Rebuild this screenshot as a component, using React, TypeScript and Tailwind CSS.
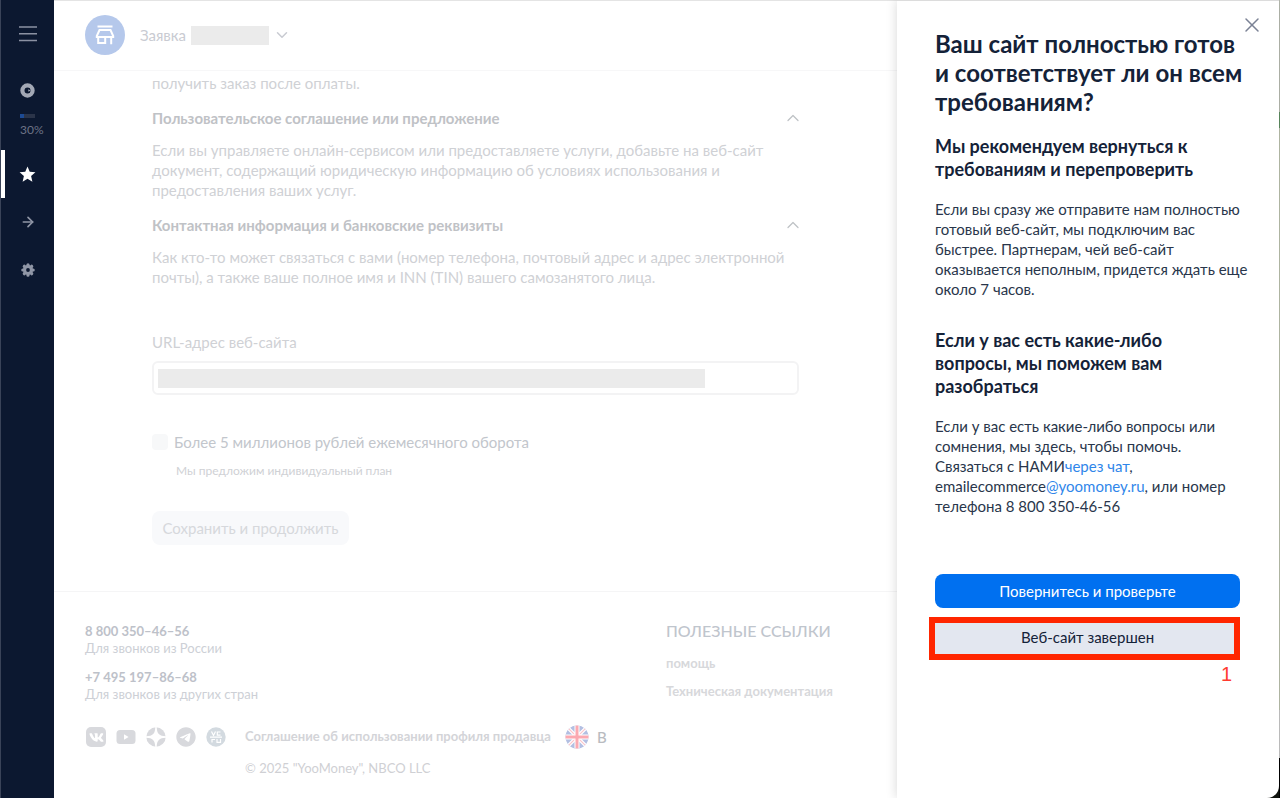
import React, { useState } from 'react';
import { ArrowRight, ChevronDown, ChevronUp, X } from 'lucide-react';
import { FaVk } from 'react-icons/fa';
import { FaTelegram } from 'react-icons/fa6';
import { MdStar } from 'react-icons/md';

const SECTIONS = [
  {
    title: 'Пользовательское соглашение или предложение',
    text: 'Если вы управляете онлайн-сервисом или предоставляете услуги, добавьте на веб-сайт документ, содержащий юридическую информацию об условиях использования и предоставления ваших услуг.',
  },
  {
    title: 'Контактная информация и банковские реквизиты',
    text: 'Как кто-то может связаться с вами (номер телефона, почтовый адрес и адрес электронной почты), а также ваше полное имя и INN (TIN) вашего самозанятого лица.',
  },
];

const PHONES = [
  { number: '8 800 350–46–56', note: 'Для звонков из России' },
  { number: '+7 495 197–86–68', note: 'Для звонков из других стран' },
];

const StoreIcon = () => (
  <svg width="20" height="20" viewBox="0 0 20 20" fill="none" stroke="white" strokeWidth="2">
    <path d="M2.5 1.500h15" />
    <path d="M4.500 5h11l2.700 6v1H1.800v-1z" />
    <path d="M3.200 12.500V18h7v-5.500M16.200 12.500V19.200" />
  </svg>
);

const CoinIcon = () => (
  <svg width="15" height="15" viewBox="0 0 15 15">
    <circle cx="7.5" cy="7.5" r="5.1" fill="none" stroke="#a3a8b5" strokeWidth="4.2" />
    <path d="M7.4 5.2h2.4v4.6H7.4z" fill="#0c1830" />
    <path d="M8.3 6.3l2.2 1.2-2.2 1.2z" fill="#a3a8b5" />
  </svg>
);

const MenuIcon = () => (
  <svg width="18" height="16" viewBox="0 0 18 16" stroke="#8b91a2" strokeWidth="1.5">
    <path d="M0 1h18M0 7.7h18M0 14.5h18" />
  </svg>
);

const GearIcon = () => (
  <svg width="14" height="14" viewBox="0 0 14 14">
    <g stroke="#9096a6" strokeWidth="3.2" strokeLinecap="round">
      <path d="M7 1.800v10.400M1.800 7h10.400M3.300 3.300l7.400 7.400M10.700 3.300l-7.400 7.400" />
    </g>
    <circle cx="7" cy="7" r="5" fill="#9096a6" />
    <circle cx="7" cy="7" r="1.900" fill="#0c1830" />
  </svg>
);

const YoutubeIcon = () => (
  <svg width="20" height="20" viewBox="0 0 20 20">
    <rect x="0.5" y="3" width="19" height="14" rx="3.5" fill="#d8d9dd" />
    <path d="M8 7.3v5.4l4.6-2.7z" fill="white" />
  </svg>
);

const ZenIcon = () => (
  <svg width="20" height="20" viewBox="0 0 20 20">
    <circle cx="10" cy="10" r="9.7" fill="#d8d9dd" />
    <path d="M9.300 0h1.400C10.900 6.800 13.200 9.100 20 9.300v1.400C13.200 10.900 10.900 13.200 10.700 20H9.300C9.100 13.200 6.800 10.900 0 10.700V9.300C6.800 9.100 9.100 6.800 9.300 0z" fill="white" />
  </svg>
);

const VcIcon = () => (
  <svg width="20" height="20" viewBox="0 0 20 20">
    <circle cx="10" cy="10" r="9.7" fill="#d3dae0" />
    <g fill="none" stroke="white" strokeWidth="1.2">
      <path d="M5.500 4.500l2 4 2-4M14.500 5h-3.200v3.200h3.200" />
      <path d="M4 10.200h12M6 15.500v-3h3M11 12v3.300h3.500V12" />
    </g>
  </svg>
);

const FlagIcon = () => (
  <svg width="24" height="24" viewBox="0 0 24 24">
    <defs>
      <clipPath id="flag">
        <circle cx="12" cy="12" r="11.500" />
      </clipPath>
    </defs>
    <g clipPath="url(#flag)">
      <rect width="24" height="24" fill="#b3bfe2" />
      <path d="M0 0l24 24M24 0L0 24" stroke="white" strokeWidth="3.500" />
      <path d="M0 0l24 24M24 0L0 24" stroke="#fac4ca" strokeWidth="1.200" />
      <path d="M12 0v24M0 12h24" stroke="white" strokeWidth="5" />
      <path d="M12 0v24M0 12h24" stroke="#fba9b1" strokeWidth="3" />
    </g>
  </svg>
);

const Sidebar = () => (
  <nav className="flex w-[54px] shrink-0 flex-col border-l border-[#3a4358] bg-[#0c1830] text-[#9096a6]">
    <button type="button" aria-label="Меню" className="mt-4 flex h-9 items-center justify-center">
      <MenuIcon />
    </button>
    <a href="#profile" aria-label="Профиль" className="mt-[26px] flex h-6 items-center justify-center">
      <CoinIcon />
    </a>
    <div className="mt-3 flex flex-col px-[19px]">
      <div className="h-1 w-[15px] bg-[#2b3449]">
        <div className="h-1 w-1 bg-[#1c4a94]"></div>
      </div>
      <span className="mt-1 text-[12px] leading-4 text-[#6c7386]">30%</span>
    </div>
    <a href="#favorites" aria-label="Избранное" className="mt-3 flex h-12 items-center border-l-4 border-white pl-[13px] text-white">
      <MdStar size={19} />
    </a>
    <a href="#next" aria-label="Далее" className="flex h-12 items-center justify-center">
      <ArrowRight size={16} strokeWidth={2.5} />
    </a>
    <a href="#settings" aria-label="Настройки" className="flex h-12 items-center justify-center">
      <GearIcon />
    </a>
  </nav>
);

const Footer = () => (
  <footer className="flex flex-1 flex-col border-t border-[#f5f5f6] pl-[31px] pt-[31px]">
    <div className="flex">
      <div className="w-[581px]">
        {PHONES.map((p) => (
          <div key={p.number} className="mb-3 text-[13px] leading-[17px]">
            <a href="#phone" className="block font-bold text-[#bdc1c9]">{p.number}</a>
            <p className="text-[#cdd0d6]">{p.note}</p>
          </div>
        ))}
      </div>
      <div className="flex flex-col text-[13px] font-bold text-[#d7d8db]">
        <h2 className="text-[16px] leading-4 font-medium text-[#bfc5cd]">ПОЛЕЗНЫЕ ССЫЛКИ</h2>
        <a href="#help" className="mt-4 leading-4">помощь</a>
        <a href="#docs" className="mt-3 leading-4">Техническая документация</a>
      </div>
    </div>
    <div className="mt-2.5 flex items-center">
      <div className="flex w-[160px] gap-[10px] pl-px text-[#d8d9dd]">
        <a href="#vk" aria-label="VK" className="flex size-5 items-center justify-center rounded-[5px] bg-[#d8d9dd] text-white"><FaVk size={15} /></a>
        <a href="#youtube" aria-label="YouTube"><YoutubeIcon /></a>
        <a href="#zen" aria-label="Дзен"><ZenIcon /></a>
        <a href="#telegram" aria-label="Telegram"><FaTelegram size={20} /></a>
        <a href="#vc" aria-label="vc.ru"><VcIcon /></a>
      </div>
      <a href="#agreement" className="w-[320px] text-[13px] font-bold text-[#d3d4d8]">Соглашение об использовании профиля продавца</a>
      <button type="button" className="flex items-center gap-2 text-[15px] font-medium text-[#b9bbc0]">
        <FlagIcon /> В
      </button>
    </div>
    <p className="mt-[9px] pl-[160px] text-[13px] leading-5 text-[#cfd0d4]">© 2025 "YooMoney", NBCO LLC</p>
  </footer>
);

const Drawer = () => (
  <aside className="z-10 flex w-[382px] shrink-0 flex-col rounded-br-xl border-t border-[#dcdcdc] bg-white pl-[38px] pr-[39px] text-[#142238] shadow-[0_0_12px_rgba(0,0,0,0.16)]">
    <div className="relative pt-7">
      <h1 className="text-[24px] leading-[29px] font-bold whitespace-nowrap">
        Ваш сайт полностью готов<br />и соответствует ли он всем<br />требованиям?
      </h1>
      <button type="button" aria-label="Закрыть" className="absolute -right-6 top-3 text-[#7b8295]">
        <X size={24} strokeWidth={1.5} />
      </button>
    </div>
    <h2 className="mt-[19px] text-[18px] leading-[23px] font-bold">
      Мы рекомендуем вернуться к<br />требованиям и перепроверить
    </h2>
    <p className="mt-[18px] text-[15px] leading-5 whitespace-nowrap text-[#29364b]">
      Если вы сразу же отправите нам полностью<br />готовый веб-сайт, мы подключим вас<br />быстрее. Партнерам, чей веб-сайт<br />оказывается неполным, придется ждать еще<br />около 7 часов.
    </p>
    <h2 className="mt-[30px] text-[18px] leading-[23px] font-bold">
      Если у вас есть какие-либо<br />вопросы, мы поможем вам<br />разобраться
    </h2>
    <p className="mt-[18px] text-[15px] leading-5 whitespace-nowrap text-[#29364b]">
      Если у вас есть какие-либо вопросы или<br />сомнения, мы здесь, чтобы помочь.<br />
      Связаться с НАМИ<a href="#chat" className="text-[#2f86ea]">через чат</a>,<br />
      emailecommerce<a href="#mail" className="text-[#2f86ea]">@yoomoney.ru</a>, или номер<br />телефона 8 800 350-46-56
    </p>
    <button type="button" className="mt-[58px] h-[34px] rounded-lg bg-[#0070f0] text-[15px] text-white">
      Повернитесь и проверьте
    </button>
    <div className="mt-[9px] -ml-1.5 flex flex-col">
      <button type="button" className="h-[43px] border-6 border-[#ff2600] bg-[#e3e7f0] pb-1 pl-1.5 text-[15px] leading-5">
        Веб-сайт завершен
      </button>
      <span className="mt-0.5 pr-2 text-right font-['Liberation_Sans'] text-[20px] leading-6 text-[#ff3b30]">1</span>
    </div>
  </aside>
);

export default function App() {
  const [bigTurnover, setBigTurnover] = useState(false);

  return (
    <div className="flex min-h-screen bg-[#10140f] font-['Lato',sans-serif] text-[15px]">
      <Sidebar />

      <div className="flex min-w-0 flex-1 flex-col border-t border-[#e4e4e4] bg-white">
        <header className="flex h-[70px] items-center border-b border-[#f7f7f8] pb-px pl-[31px]">
          <div className="flex size-10 items-center justify-center rounded-full bg-[#b5c8eb]">
            <StoreIcon />
          </div>
          <button type="button" className="ml-[15px] flex items-center text-[#c9cbd2]">
            Заявка
            <span className="ml-[5px] h-[19px] w-[78px] bg-[#ebebeb]"></span>
            <ChevronDown size={18} className="ml-1" />
          </button>
        </header>

        <main className="ml-[98px] w-[647px] pb-[46px] pt-[2px] leading-5 text-[#cfd1d5]">
          <p>получить заказ после оплаты.</p>
          {SECTIONS.map((s) => (
            <section key={s.title} className="mt-[15px]">
              <h3 className="flex items-center justify-between font-bold text-[#bfc2c6]">
                {s.title}
                <ChevronUp size={20} strokeWidth={1.5} className="-mr-1" />
              </h3>
              <p className="mt-3">{s.text}</p>
            </section>
          ))}

          <label htmlFor="site-url" className="mt-[45px] block">URL-адрес веб-сайта</label>
          <div className="mt-[9px] flex h-[34px] items-center rounded-md border-2 border-[#f3f3f4] px-1">
            <input id="site-url" type="text" className="h-[19px] w-[547px] bg-[#ebebeb] outline-none" />
          </div>

          <div className="mt-[37px] flex items-center gap-1.5">
            <input
              id="turnover"
              type="checkbox"
              checked={bigTurnover}
              onChange={(e) => setBigTurnover(e.target.checked)}
              className="size-4 appearance-none rounded bg-[#f7f8f9] checked:bg-[#b5c8eb]"
            />
            <label htmlFor="turnover" className="text-[#c2c6cc]">Более 5 миллионов рублей ежемесячного оборота</label>
          </div>
          <p className="mt-[9px] pl-6 text-[12px]">Мы предложим индивидуальный план</p>
          <button type="button" className="mt-[30px] h-[34px] w-[197px] rounded-lg bg-[#f8f9fb] text-[#d6d8dc]">
            Сохранить и продолжить
          </button>
        </main>

        <Footer />
      </div>

      <Drawer />
      <div className="flex w-px shrink-0 flex-col">
        <div className="h-28 bg-[#b9bdb2]"></div>
        <div className="h-4 bg-[#5f8f62]"></div>
        <div className="flex-1 bg-[#bcc3ae]"></div>
        <div className="h-12 bg-[#c9c9c9]"></div>
        <div className="h-10 bg-black"></div>
      </div>
    </div>
  );
}
